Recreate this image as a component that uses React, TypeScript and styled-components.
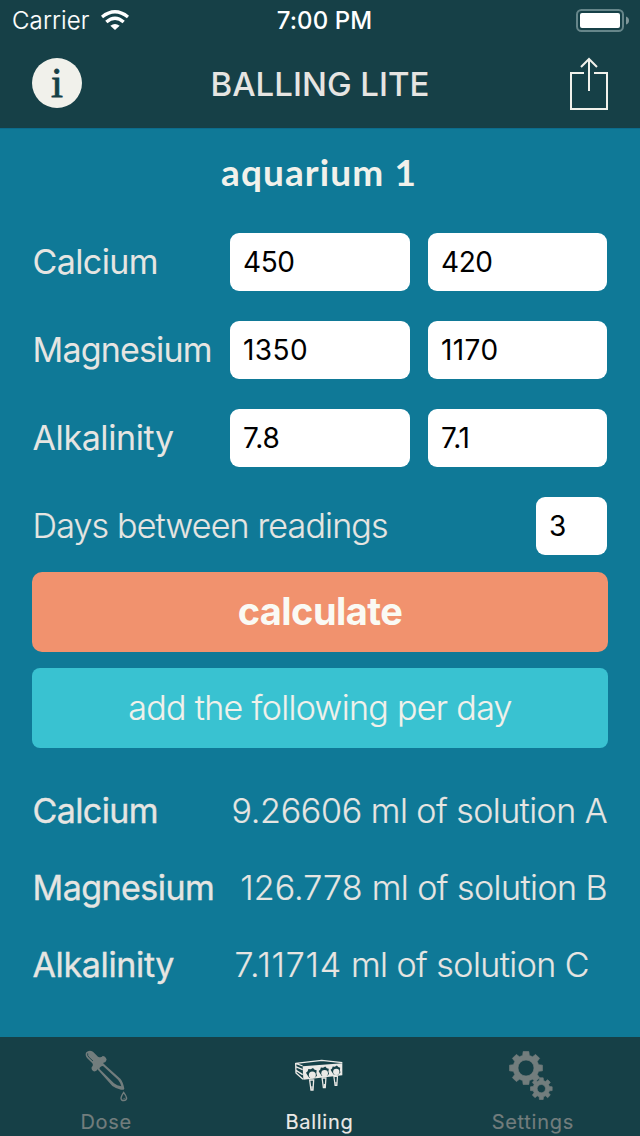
import React from "react";
import styled, { createGlobalStyle } from "styled-components";

const GlobalStyle = createGlobalStyle`
  * { box-sizing: border-box; }
  body { margin: 0; background: #0f7997; }
`;

const Screen = styled.div`
  width: 640px;
  height: 1136px;
  display: flex;
  flex-direction: column;
  background: #0f7997;
  color: #e6e5e2;
  font-family: Inter, "Liberation Sans", sans-serif;
  font-size: 34px;
  white-space: nowrap;
`;

const Header = styled.header`
  height: 129px;
  flex: none;
  background: #164047;
  border-bottom: 1px solid #0b6c8d;
`;

const StatusBar = styled.div`
  height: 40px;
  display: grid;
  grid-template-columns: 1fr auto 1fr;
  align-items: center;
  padding: 0 11px 0 12px;
  color: #fff;
  font-size: 24px;
`;

const Carrier = styled.div`
  display: flex;
  align-items: center;
  gap: 11px;
  letter-spacing: 0.15px;
  font-weight: 300;
  -webkit-text-stroke: 0.15px currentColor;
`;

const Clock = styled.div`
  font-weight: 500;
  letter-spacing: 0.1px;
  padding-left: 8px;
`;

const BatterySlot = styled.div`
  display: flex;
  justify-content: flex-end;
`;

const NavBar = styled.div`
  height: 88px;
  display: grid;
  grid-template-columns: 1fr auto 1fr;
  align-items: center;
  padding: 0 32px;
`;

const InfoButton = styled.button`
  width: 50px;
  height: 50px;
  margin: 0 0 3px;
  padding: 0;
  border: 0;
  border-radius: 50%;
  background: #f1f1eb;
  color: #164047;
  font: 400 43px/48px "Liberation Serif", serif;
  -webkit-text-stroke: 0.8px #164047;
`;

const ShareButton = styled.button`
  justify-self: end;
  width: 38px;
  height: 53px;
  margin: 0 0 2px;
  padding: 0;
  border: 0;
  background: none;
`;

const Title = styled.h1`
  margin: 0;
  font-size: 33px;
  font-weight: 500;
  letter-spacing: 0;
`;

const Content = styled.main`
  flex: 1;
  padding: 0 32px;
  display: flex;
  flex-direction: column;
`;

const TankName = styled.h2`
  margin: 0;
  height: 104px;
  padding: 20px 2px 0 0;
  text-align: center;
  font: 700 37px/46px Lato, sans-serif;
  letter-spacing: 1.1px;
  color: #f1f1eb;
`;

const FieldRow = styled.div`
  height: 58px;
  margin-bottom: 30px;
  display: flex;
  align-items: center;
`;

const Label = styled.label<{ $light?: boolean; $spacing?: number }>`
  flex: 1;
  padding: 0 0 1px 0.5px;
  font-weight: ${(p) => (p.$light ? 300 : 400)};
  letter-spacing: ${(p) => p.$spacing ?? -0.82}px;
  -webkit-text-stroke: ${(p) => (p.$light ? 0.15 : 0)}px currentColor;
`;

const Field = styled.input<{ $width: number; $spacing?: number }>`
  width: ${(p) => p.$width}px;
  height: 58px;
  margin: 0 1px 0 16px;
  padding: 0 13px;
  border: 0;
  border-radius: 9px;
  background: #fff;
  color: #000;
  font: 400 28px Inter, sans-serif;
  letter-spacing: ${(p) => p.$spacing ?? -0.4}px;

  & + & {
    margin-left: 17px;
  }
`;

const Bar = styled.button<{ $primary?: boolean }>`
  height: 80px;
  flex: none;
  border: 0;
  padding: 0 0 2px;
  border-radius: ${(p) => (p.$primary ? 10 : 8)}px;
  margin-top: ${(p) => (p.$primary ? -13 : 16)}px;
  background: ${(p) => (p.$primary ? "#f1926e" : "#39c2d1")};
  color: ${(p) => (p.$primary ? "#fafaf4" : "#f1f1eb")};
  font-family: inherit;
  font-weight: ${(p) => (p.$primary ? 700 : 300)};
  font-size: ${(p) => (p.$primary ? 38 : 34)}px;
  letter-spacing: ${(p) => (p.$primary ? -0.55 : -0.66)}px;
  -webkit-text-stroke: ${(p) => (p.$primary ? 0 : 0.15)}px currentColor;
`;

const Results = styled.dl`
  margin: 24px 0 0;
`;

const ResultRow = styled.div`
  height: 77px;
  display: flex;
  align-items: center;
`;

const Substance = styled.dt<{ $spacing: number }>`
  padding-left: 0.5px;
  font-weight: 400;
  letter-spacing: ${(p) => p.$spacing}px;
  -webkit-text-stroke: 0.35px currentColor;
`;

const Amount = styled.dd<{ $inset: number }>`
  margin: 0 ${(p) => p.$inset}px 0 auto;
  font-weight: 300;
  letter-spacing: -0.55px;
  -webkit-text-stroke: 0.15px currentColor;
`;

const Quantity = styled.span<{ $spacing: number }>`
  letter-spacing: ${(p) => p.$spacing}px;
`;

const TabBar = styled.nav`
  height: 99px;
  flex: none;
  display: grid;
  grid-template-columns: repeat(3, 1fr);
  background: #164047;
`;

const Tab = styled.a<{ $active?: boolean }>`
  display: flex;
  flex-direction: column;
  align-items: center;
  color: ${(p) => (p.$active ? "#ebe9e6" : "#727d7d")};
`;

const TabLabel = styled.span`
  padding-right: 1px;
  font-size: 20px;
  font-weight: 400;
  line-height: 30px;
  letter-spacing: 0.7px;
  -webkit-text-stroke: 0.15px currentColor;
`;

const WifiIcon = () => (
  <svg width="28" height="20" viewBox="0 0 84 60" fill="#fff">
    <path d="M42 60 28 47Q42 37 56 47Z" />
    <path d="M16 36Q42 13 68 36" fill="none" stroke="#fff" strokeWidth="10" />
    <path d="M3 21Q42 -10 81 21" fill="none" stroke="#fff" strokeWidth="10" />
  </svg>
);

const BatteryIcon = () => (
  <svg width="53" height="23" viewBox="0 0 53 23">
    <rect x="1" y="1" width="46" height="21" rx="4.5" fill="none" stroke="#66868a" strokeWidth="2" />
    <rect x="4" y="4" width="40" height="15" rx="2" fill="#fff" />
    <path d="M50 7.5q3 1 3 4t-3 4z" fill="#7f979a" />
  </svg>
);

const ShareIcon = () => (
  <svg width="38" height="53" viewBox="0 0 38 53" fill="none" stroke="#f1f1eb" strokeWidth="2" display="block">
    <path d="M14 16H1v36h36V16H24M19 34V1.5M11 10l8-8 8 8" />
  </svg>
);

const DropperIcon = () => (
  <svg width="80" height="70" viewBox="-10 3 240 210">
    <path
      d="M48 49Q56 41 68 47L83 62Q92 66 97 60Q106 61 109 71Q108 78 98 81L104 87 150 128Q158 137 162 158Q160 163 152 161Q137 158 126 150L86 105 81 100Q80 107 70 106Q62 102 64 93Q70 89 66 82L50 66Q43 57 48 49Z"
      fill="#727d7d"
    />
    <path d="M88 95Q94 88 99 91L143 131Q150 139 153 151Q140 149 131 142L90 101Q86 98 88 95Z" fill="#164047" />
    <path d="M52 52Q50 59 57 65L68 75" fill="none" stroke="#164047" strokeWidth="2.5" />
    <path d="M160 169Q152 181 152 187Q153 194 160 194Q169 193 169 186Q168 180 160 169Z" fill="none" stroke="#727d7d" strokeWidth="4" />
    <path d="M158 189q5 2 7-4" fill="none" stroke="#727d7d" strokeWidth="2" />
  </svg>
);

const PUMP_HEADS = [
  { x: 95, y: 112, scale: 1 },
  { x: 132, y: 107, scale: 0.95 },
  { x: 167, y: 103, scale: 0.9 },
];

const DosingPumpIcon = () => (
  <svg width="80" height="70" viewBox="0 3 240 210">
    <path d="M68 91 187 82V118L70 131Z" fill="#ebe9e6" />
    <path
      d="M68 90 47 82 125 73 187 80M47 82 48 111 69 130M47 92 68 101M48 103 68 116"
      fill="none"
      stroke="#ebe9e6"
      strokeWidth="4"
      strokeLinejoin="round"
    />
    {PUMP_HEADS.map(({ x, y, scale }) => (
      <g key={x} transform={`translate(${x} ${y}) scale(${scale})`}>
        <path d="M-13 5L-17 -2-12 -6-10 -13-3 -12 4 -16 9 -11 15 -9 14 0 16 7 9 14H-7Z" fill="#164047" />
        <circle cx="2" cy="5" r="10.5" fill="#ebe9e6" />
        <path d="M-6 20H6L4 50H-2Z" fill="none" stroke="#ebe9e6" strokeWidth="4" />
        <path d="M-1 39H3V50H-1Z" fill="#ebe9e6" />
      </g>
    ))}
  </svg>
);

function gearPath(cx: number, cy: number, outer: number, root: number, hole: number) {
  const points: string[] = [];
  for (let i = 0; i < 8; i++) {
    const mid = (i * Math.PI) / 4;
    const corners: [number, number][] = [
      [root, -0.26],
      [outer, -0.17],
      [outer, 0.17],
      [root, 0.26],
    ];
    for (const [radius, offset] of corners) {
      const x = cx + radius * Math.cos(mid + offset);
      const y = cy + radius * Math.sin(mid + offset);
      points.push(`${x.toFixed(1)} ${y.toFixed(1)}`);
    }
  }
  return `M${points.join("L")}ZM${cx - hole} ${cy}a${hole} ${hole} 0 1 0 ${hole * 2} 0a${hole} ${hole} 0 1 0 ${-hole * 2} 0Z`;
}

const GearsIcon = () => (
  <svg width="80" height="70" viewBox="25 3 240 210" fill="#727d7d" fillRule="evenodd" stroke="#727d7d" strokeWidth="2" strokeLinejoin="round">
    <path d={gearPath(124, 96, 50, 39, 24)} />
    <path d={gearPath(170, 158, 33, 25, 12.5)} />
  </svg>
);

const READINGS = [
  { name: "Calcium", before: "450", after: "420", spacing: -0.4, labelSpacing: -0.6 },
  { name: "Magnesium", before: "1350", after: "1170", spacing: 0.4, labelSpacing: -0.82 },
  { name: "Alkalinity", before: "7.8", after: "7.1", spacing: -0.2, labelSpacing: -0.4 },
];

const DOSES = [
  { name: "Calcium", labelSpacing: -0.6, quantity: "9.26606", solution: "A", inset: 1, spacing: -0.3 },
  { name: "Magnesium", labelSpacing: -0.55, quantity: "126.778", solution: "B", inset: 1, spacing: 0.1 },
  { name: "Alkalinity", labelSpacing: -0.35, quantity: "7.11714", solution: "C", inset: 19, spacing: 0.8 },
];

export default function App() {
  return (
    <Screen>
      <GlobalStyle />
      <Header>
        <StatusBar>
          <Carrier>
            Carrier
            <WifiIcon />
          </Carrier>
          <Clock>7:00 PM</Clock>
          <BatterySlot>
            <BatteryIcon />
          </BatterySlot>
        </StatusBar>
        <NavBar>
          <InfoButton>i</InfoButton>
          <Title>BALLING LITE</Title>
          <ShareButton>
            <ShareIcon />
          </ShareButton>
        </NavBar>
      </Header>
      <Content>
        <TankName>aquarium 1</TankName>
        {READINGS.map((r) => (
          <FieldRow key={r.name}>
            <Label $spacing={r.labelSpacing}>{r.name}</Label>
            <Field $width={180} $spacing={r.spacing} defaultValue={r.before} />
            <Field $width={179} $spacing={r.spacing} defaultValue={r.after} />
          </FieldRow>
        ))}
        <FieldRow>
          <Label $light>Days between readings</Label>
          <Field $width={71} defaultValue="3" />
        </FieldRow>
        <Bar $primary>calculate</Bar>
        <Bar>add the following per day</Bar>
        <Results>
          {DOSES.map((d) => (
            <ResultRow key={d.name}>
              <Substance $spacing={d.labelSpacing}>{d.name}</Substance>
              <Amount $inset={d.inset}>
                <Quantity $spacing={d.spacing}>{d.quantity}</Quantity> ml of solution {d.solution}
              </Amount>
            </ResultRow>
          ))}
        </Results>
      </Content>
      <TabBar>
        <Tab>
          <DropperIcon />
          <TabLabel>Dose</TabLabel>
        </Tab>
        <Tab $active>
          <DosingPumpIcon />
          <TabLabel>Balling</TabLabel>
        </Tab>
        <Tab>
          <GearsIcon />
          <TabLabel>Settings</TabLabel>
        </Tab>
      </TabBar>
    </Screen>
  );
}
